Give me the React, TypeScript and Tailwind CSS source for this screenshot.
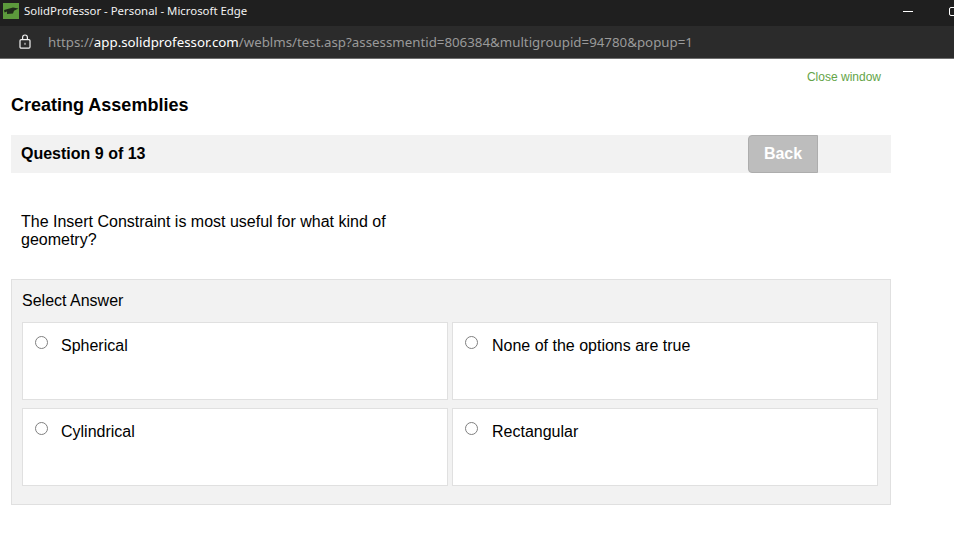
const answers = ["Spherical", "None of the options are true", "Cylindrical", "Rectangular"];

function Logo() {
  return (
    <svg width="16" height="16" viewBox="0 0 16 16" className="shrink-0">
      <rect width="16" height="16" fill="#5c9a3c" />
      <path d="M1 7 L10 4.5 L15.5 5.5 L11 7.8 L10 10.5 L4 11 L4 8.5 L1.5 9.5 Z" fill="#1f2a1a" />
    </svg>
  );
}

function Lock() {
  return (
    <svg width="12" height="15" viewBox="0 0 12 15" fill="none" stroke="#f2f2f2" strokeWidth="1.2" className="mb-[2px] shrink-0">
      <rect x="1" y="5.6" width="10" height="8.6" rx="1.2" />
      <path d="M3.6 5.6 V3.4 a2.4 2.4 0 0 1 4.8 0 V5.6" />
      <rect x="5.5" y="8.8" width="1" height="2" fill="#f2f2f2" stroke="none" />
    </svg>
  );
}

function Answer({ label, right }: { label: string; right: boolean }) {
  return (
    <label className="flex h-[78px] items-start border border-[#e0e0e0] bg-white pl-[12px] pt-[13px]">
      <span className="h-[13px] w-[13px] shrink-0 rounded-full border-[1.5px] border-[#808080] bg-white" />
      <span className={right ? "ml-[14px] mt-[1px] text-[16px] leading-[18px] text-black" : "ml-[13px] mt-[1px] text-[16px] leading-[18px] text-black"}>{label}</span>
    </label>
  );
}

export default function App() {
  return (
    <div className="h-[553px] w-[954px] overflow-hidden bg-white font-['Liberation_Sans',sans-serif]">
      <div className="flex h-[26px] items-start justify-between bg-[#1f1f1f] pl-[3px] pt-[2px]">
        <div className="flex items-center gap-[5px]">
          <Logo />
          <span className="font-['Noto_Sans',sans-serif] text-[11.4px] text-[#f2f2f2]">SolidProfessor - Personal - Microsoft Edge</span>
        </div>
        <div className="flex h-[18px] items-center gap-[36px]">
          <span className="h-px w-[10px] bg-white" />
          <span className="-mr-[5px] h-[9px] w-[10px] rounded-[2px] border border-white" />
        </div>
      </div>
      <div className="flex h-[33px] items-center gap-[17px] border-b border-[#6e6e6e] bg-[#2b2b2b] pl-[19px]">
        <Lock />
        <span className="pt-[1px] font-['Noto_Sans',sans-serif] text-[13.3px] text-[#9a9a9a]">
          https://<span className="text-white">app.solidprofessor.com</span>/weblms/test.asp?assessmentid=806384&amp;multigroupid=94780&amp;popup=1
        </span>
      </div>

      <div className="w-[891px] pl-[11px]">
        <div className="flex justify-end pr-[10px] pt-[11px]">
          <a className="text-[12px] leading-[14px] text-[#64a448]">Close window</a>
        </div>
        <h1 className="mt-[10px] text-[18px] font-bold leading-[22px] text-black">Creating Assemblies</h1>

        <div className="mt-[19px] flex h-[38px] items-center justify-between bg-[#f2f2f2] pl-[10px] pr-[73px]">
          <span className="text-[16px] font-bold text-black">Question 9 of 13</span>
          <button className="h-[38px] w-[70px] rounded-l-[4px] border border-[#adadad] bg-[#bdbdbd] text-[16px] font-bold text-white">Back</button>
        </div>

        <p className="mt-[40px] w-[400px] pl-[10px] text-[16px] leading-[18px] text-black">
          The Insert Constraint is most useful for what kind of geometry?
        </p>

        <div className="mt-[30px] h-[226px] border border-[#e0e0e0] bg-[#f2f2f2] px-[10px] pt-[12px]">
          <div className="text-[16px] leading-[18px] text-black">Select Answer</div>
          <div className="mt-[12px] grid w-[856px] grid-cols-[426px_426px] gap-x-[4px] gap-y-[8px]">
            {answers.map((a, i) => (
              <Answer key={a} label={a} right={i % 2 === 1} />
            ))}
          </div>
        </div>
      </div>
    </div>
  );
}
